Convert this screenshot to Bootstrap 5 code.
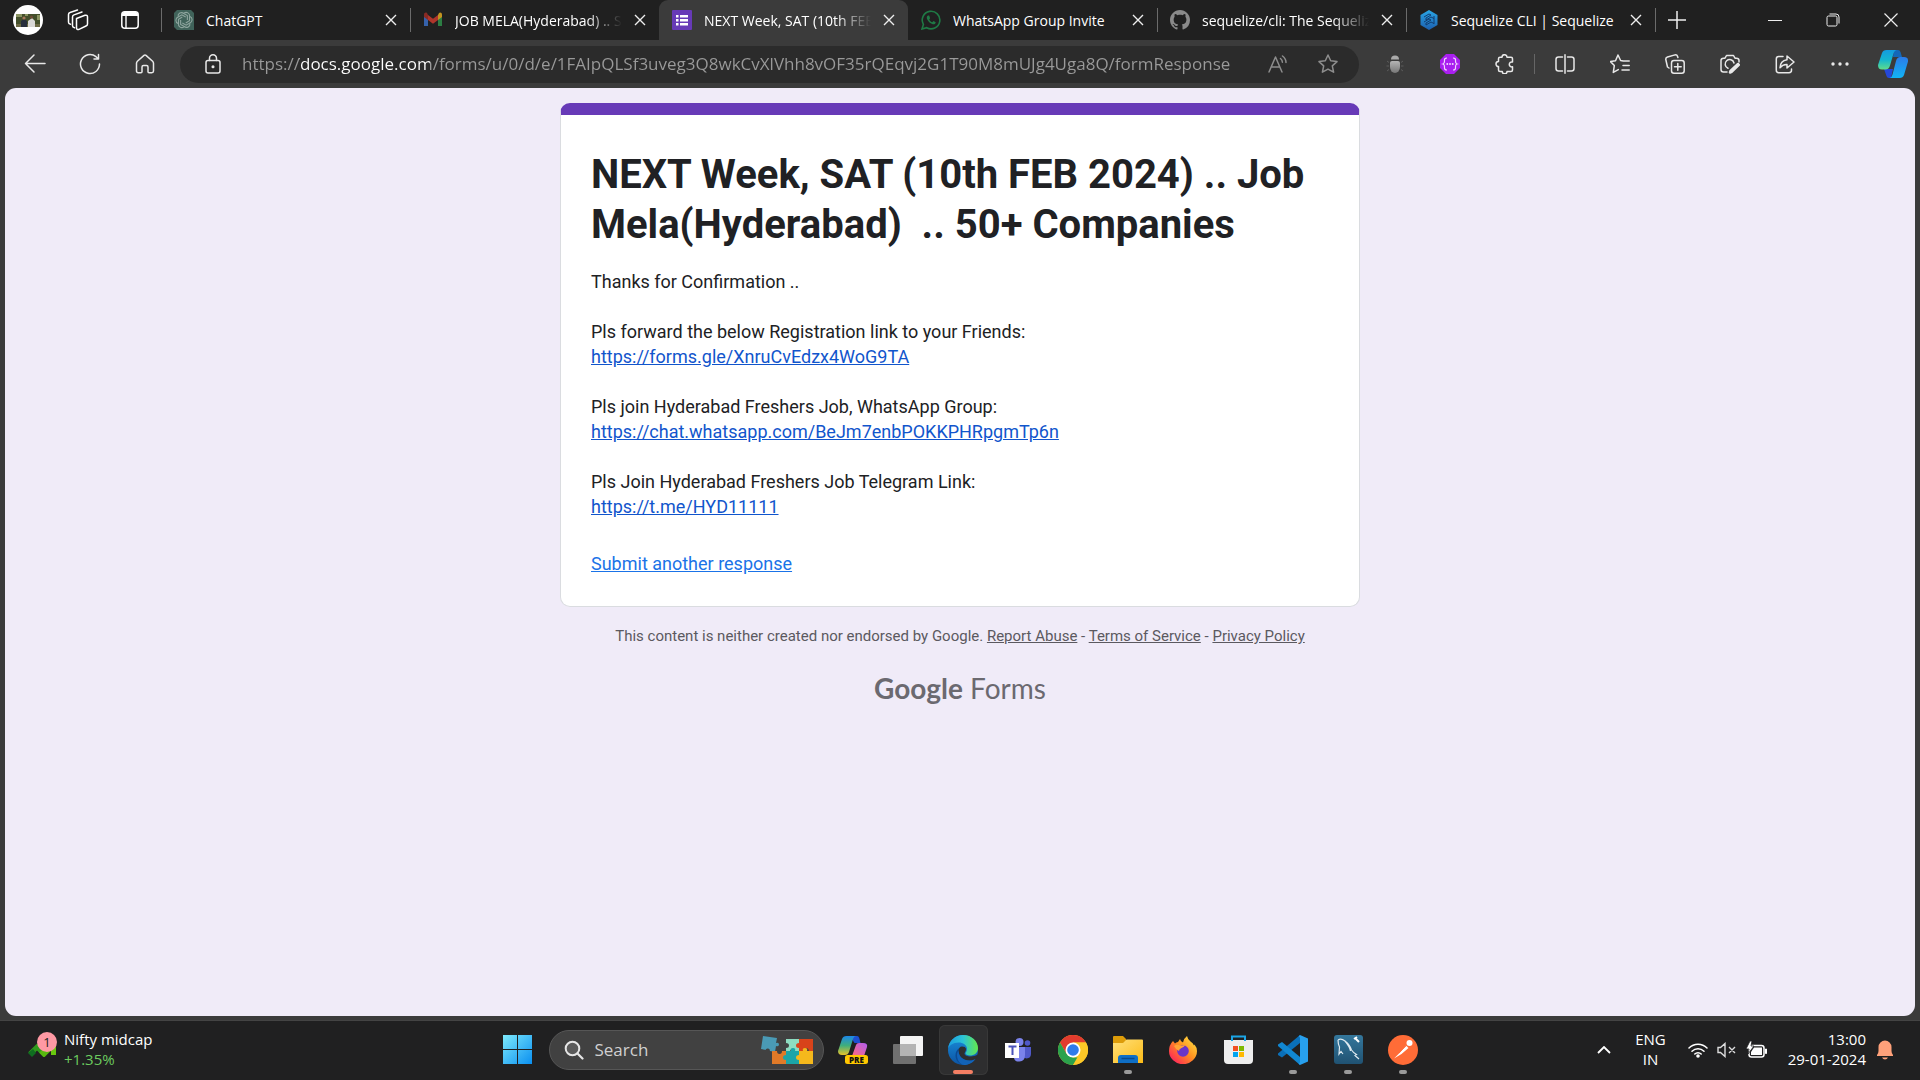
<!DOCTYPE html>
<html lang="en">
<head>
<meta charset="utf-8">
<meta name="viewport" content="width=device-width, initial-scale=1">
<title>NEXT Week, SAT (10th FEB 2024) .. Job Mela(Hyderabad) .. 50+ Companies</title>
<link rel="stylesheet" href="https://cdn.jsdelivr.net/npm/bootstrap@5.3.0/dist/css/bootstrap.min.css">
<style>
  body { background: #3b3b3b; font-family: "Open Sans", "Noto Sans", sans-serif; color: #fff; }
  svg { display: block; flex: none; }
  .ln { fill: none; stroke: currentColor; stroke-width: 1.5; stroke-linecap: round; stroke-linejoin: round; }
  .plain { background: none; border: 0; padding: 0; color: inherit; }

  /* tab strip */
  .strip { height: 40px; background: #202020; font-size: 14px; }
  .lead-tools { width: 161px; padding: 0 22px 0 13px; }
  .avatar { width: 30px; height: 30px; background: #fff; }
  .tab { flex: 0 1 249px; min-width: 0; height: 40px; padding: 0 13px; gap: 12px; }
  .tab-line::before { content: ""; width: 1px; height: 24px; background: #6b6b6b; margin-left: -13px; }
  .tab.active-tab { background: #3b3b3b; border-radius: 9px 9px 0 0; }
  .tab-title { flex: 1 1 0; min-width: 0; overflow: hidden; white-space: nowrap; color: #fff; }
  .fade-end { -webkit-mask-image: linear-gradient(90deg, #000 calc(100% - 36px), transparent); mask-image: linear-gradient(90deg, #000 calc(100% - 36px), transparent); }
  .new-tab { padding-left: 13px; gap: 12px; }
  .win { width: 58px; height: 40px; }

  /* toolbar */
  .tools { height: 48px; padding-right: 1px; color: #e8e8e8; }
  .tool { width: 55px; height: 40px; flex: none; display: grid; place-items: center; }
  .tool.last-tool { width: 52px; }
  .nav-set { padding-left: 7px; }
  .address { height: 37px; background: #2b2b2b; border-radius: 19px; padding: 0 6px 0 24px; }
  .address .tool { width: 50px; }
  .split { width: 1px; height: 20px; margin: 0 2px; background: #666; }
  .url {
    border: 0; outline: 0; min-width: 0; padding: 0 0 2px; margin-left: 20px; font-size: 17px; height: 30px;
    color: transparent; -webkit-background-clip: text; background-clip: text;
    background-image: linear-gradient(90deg, #9a9a9a 57px, #fff 57px, #fff 188px, #9a9a9a 188px);
  }
  .dim { color: #8d8d8d; }

  /* page */
  .sheet { background: #f0ebf8; margin: 0 5px 4px; border-radius: 11px; padding-top: 15px; font-family: Roboto, sans-serif; color: #202124; overflow: hidden; }
  .form-col { max-width: 800px; }
  .form-card { background: #fff; border: 1px solid #dadce0; border-top: 12px solid #673ab7; border-radius: 10px; padding: 35px 30px 30px; font-size: 18px; line-height: 25px; }
  .form-card h1 { font-size: 40px; line-height: 50px; font-weight: 700; margin-bottom: 19px; white-space: pre-wrap; }
  .form-card p { margin-bottom: 25px; }
  .form-card p.again-row { margin-bottom: 0; padding-top: 7px; }
  .form-card a { color: #1155cc; }
  .form-card a.again { color: #1a73e8; }
  .legal { font-size: 15px; line-height: 20px; color: #5b5960; margin-top: 19px; }
  .legal a { color: inherit; }
  .brand { font-family: Lato, sans-serif; font-size: 28px; line-height: 36px; color: #6b6970; margin-top: 24px; }
  .brand b { font-weight: 700; }

  /* taskbar */
  .taskbar { height: 60px; padding-bottom: 2px; background: #202021; border-top: 1px solid #444; display: grid; grid-template-columns: 1fr auto 1fr; align-items: center; }
  .two-line { line-height: 20px; font-size: 15px; padding-bottom: 2px; }
  .gain { color: #6ccb5f; }
  .badge-dot { width: 20px; height: 20px; left: 13px; top: -11px; background: #ff99a4; color: #222; font-size: 13px; line-height: 20px; }
  .tray { padding-right: 26px; }
  .lang { margin-right: 22px; }
  .clock { margin-right: 10px; }
  .app { width: 55px; height: 50px; display: grid; place-items: center; position: relative; border-radius: 6px; }
  .app.is-open::after { content: ""; position: absolute; bottom: 1px; width: 8px; height: 4px; border-radius: 2px; background: #9a9a9a; }
  .app.is-front { width: 49px; margin: 0 3px; background: #2e2e2f; box-shadow: inset 0 0 0 1px #383838; }
  .app.is-front::after { width: 20px; background: #f47f64; }
  .find { width: 275px; height: 40px; background: #414141; border: 1px solid #565656; border-radius: 20px; padding: 0 10px 0 14px; margin: 0 2px 0 4px; }
  .find input { background: none; border: 0; outline: 0; color: #ddd; min-width: 0; padding: 0; font-size: 17px; margin-left: 11px; }
  .find input::placeholder { color: #d0d0d0; opacity: 1; }
</style>
<script src="https://cdn.jsdelivr.net/npm/bootstrap@5.3.0/dist/js/bootstrap.bundle.min.js"></script>
</head>
<body class="vh-100 d-flex flex-column overflow-hidden">

<svg width="0" height="0" class="position-absolute" aria-hidden="true">
  <defs>
    <linearGradient id="gWin" x1="0" y1="0" x2="1" y2="1"><stop offset="0" stop-color="#7deafc"/><stop offset="1" stop-color="#0a8ff0"/></linearGradient>
    <linearGradient id="gCopA" x1="0" y1="0" x2="0" y2="1"><stop offset="0" stop-color="#149be0"/><stop offset=".5" stop-color="#14b5d0"/><stop offset="1" stop-color="#5fdc8a"/></linearGradient>
    <linearGradient id="gCopB" x1="0" y1="0" x2="0" y2="1"><stop offset="0" stop-color="#2c7be8"/><stop offset="1" stop-color="#11b4f5"/></linearGradient>
    <linearGradient id="gCopC" x1="0" y1="0" x2="0" y2="1"><stop offset="0" stop-color="#1c87e8"/><stop offset=".5" stop-color="#3fae7c"/><stop offset="1" stop-color="#e8c22a"/></linearGradient>
    <linearGradient id="gCopD" x1="1" y1="0" x2="0" y2="1"><stop offset="0" stop-color="#b05cf0"/><stop offset="1" stop-color="#ff6a7c"/></linearGradient>
    <linearGradient id="gEdge" x1="0" y1="0" x2="1" y2="0"><stop offset="0" stop-color="#1b9de0"/><stop offset=".5" stop-color="#2cc3d6"/><stop offset="1" stop-color="#63e84a"/></linearGradient>
    <linearGradient id="gEdge2" x1="0" y1="0" x2="0" y2="1"><stop offset="0" stop-color="#1a8fdc"/><stop offset="1" stop-color="#0c54a4"/></linearGradient>
    <linearGradient id="gFold" x1="0" y1="0" x2="1" y2="1"><stop offset="0" stop-color="#ffe07a"/><stop offset="1" stop-color="#fcbb17"/></linearGradient>
    <linearGradient id="gFox" x1="1" y1="0" x2="0" y2="1"><stop offset="0" stop-color="#fff04a"/><stop offset=".45" stop-color="#ff9420"/><stop offset=".8" stop-color="#ff3b4c"/><stop offset="1" stop-color="#e31587"/></linearGradient>
    <linearGradient id="gGray" x1="0" y1="0" x2="0" y2="1"><stop offset="0" stop-color="#b5b5b5"/><stop offset="1" stop-color="#777"/></linearGradient>
    <linearGradient id="gSea" x1="0" y1="0" x2="0" y2="1"><stop offset="0" stop-color="#2aa6e6"/><stop offset="1" stop-color="#1c5fae"/></linearGradient>
    <linearGradient id="gSql" x1="0" y1="0" x2="0" y2="1"><stop offset="0" stop-color="#34779c"/><stop offset="1" stop-color="#205272"/></linearGradient>
    <symbol id="x" viewBox="0 0 12 12"><path d="M1 1l10 10M11 1L1 11" stroke="#eee" stroke-width="1.4" fill="none"/></symbol>
  </defs>
</svg>

<header class="strip d-flex align-items-center">
  <div class="lead-tools d-flex align-items-center justify-content-between">
    <button class="plain avatar rounded-circle" aria-label="Profile"><svg width="30" height="30" viewBox="0 0 30 30"><path fill="#44502c" d="M3 9h24v13H3z"/><path fill="#8b9563" d="M3 9h6v3H3zM12 9h3v2h-3zM24 10h3v5h-3z"/><path fill="#6d6a45" d="M3 19h24v3H3z"/><path fill="#272e3c" d="M8 22v-6l3-2 3 2v6z"/><path fill="#d9d8d6" d="M15 22v-6l4-3 3 3v6z"/><circle cx="11" cy="13" r="1.6" fill="#a9795c"/><circle cx="18.500" cy="12" r="1.600" fill="#6e4c38"/></svg></button>
    <button class="plain me-2" aria-label="Workspaces"><svg class="ln" width="22" height="22" viewBox="0 0 22 22"><path d="M9.500 9.500L18 6.300c1.400-.5 2.500.2 2.500 1.500V15c0 1-.5 1.600-1.500 2l-7 3.400c-1.300.5-2.500 0-2.500-1.300zM5.500 16.800V8c0-1 .5-1.700 1.500-2.100l8-2.900M1.500 13V5.500c0-1 .5-1.700 1.500-2L10.500 1M7.500 18.800c-1.300-.2-2-.9-2-2M3.500 15.200c-1.300-.2-2-.9-2-2"/></svg></button>
    <button class="plain" aria-label="Tab actions"><svg width="18" height="18" viewBox="0 0 18 18"><rect x=".8" y=".8" width="16.400" height="16.400" rx="3" fill="none" stroke="#fff" stroke-width="1.500"/><path d="M1 5V3l2-2h12l2 2v2z" fill="#fff"/><path d="M5 5v12" stroke="#fff" stroke-width="1.400"/></svg></button>
  </div>

  <div class="tab tab-line d-flex align-items-center">
    <svg width="20" height="20" viewBox="0 0 20 20"><path d="M3 0h14l3 3v17H3l-3-3V3z" fill="#40635a"/><g fill="none" stroke="#8ea59e" stroke-width="1.100"><path id="pt" d="M10 3.200a3.400 3.400 0 0 1 5.500 3.300v4.200l-3.800 2.200"/><use href="#pt" transform="rotate(60 10 10)"/><use href="#pt" transform="rotate(120 10 10)"/><use href="#pt" transform="rotate(180 10 10)"/><use href="#pt" transform="rotate(240 10 10)"/><use href="#pt" transform="rotate(300 10 10)"/></g></svg>
    <span class="tab-title">ChatGPT</span>
    <button class="plain" aria-label="Close tab"><svg width="12" height="12"><use href="#x"/></svg></button>
  </div>
  <div class="tab tab-line d-flex align-items-center">
    <svg width="20" height="20" viewBox="0 0 20 20"><g opacity=".85"><path d="M1 4.500v11.500h4V9z" fill="#3b6ec4"/><path d="M15 9v7h4V4.500z" fill="#2f8f4a"/><path d="M15 5v5l4-3V4.500c0-2-2-2.500-3-1.500z" fill="#e0a820"/><path d="M1 7l4 3V5L4 3C2.500 2 1 3 1 4.500z" fill="#9c2c24"/><path d="M5 5l5 3.800L15 5v5l-5 3.800L5 10z" fill="#c9392d"/></g></svg>
    <span class="tab-title fade-end">JOB MELA(Hyderabad) .. SAT</span>
    <button class="plain" aria-label="Close tab"><svg width="12" height="12"><use href="#x"/></svg></button>
  </div>
  <div class="tab active-tab d-flex align-items-center">
    <svg width="20" height="20" viewBox="0 0 20 20"><rect width="20" height="20" rx="1" fill="#673ab7"/><path d="M4 5h2.500v2.500H4zM8 5h8v2.500H8zM4 9h2.500v2.500H4zM8 9h8v2.500H8zM4 13h2.500v2.500H4zM8 13h8v2.500H8z" fill="#fff"/></svg>
    <span class="tab-title fade-end">NEXT Week, SAT (10th FEB 2024)</span>
    <button class="plain" aria-label="Close tab"><svg width="12" height="12"><use href="#x"/></svg></button>
  </div>
  <div class="tab d-flex align-items-center">
    <svg width="20" height="20" viewBox="0 0 20 20"><path d="M1 19l1.400-4.600A8.800 8.800 0 1 1 5.700 17.700z" fill="none" stroke="#1f7a45" stroke-width="1.600"/><path d="M7 5.500c-1.500.8-1.600 2.600-.4 4.600 1.200 2 3 3.700 5.200 4.200 1.700.3 2.900-.7 2.900-2l-2.200-1.200-1.200 1.200c-1.300-.4-2.500-1.600-3.100-2.900l.9-1.100L8.200 5.600z" fill="#1f7a45"/></svg>
    <span class="tab-title">WhatsApp Group Invite</span>
    <button class="plain" aria-label="Close tab"><svg width="12" height="12"><use href="#x"/></svg></button>
  </div>
  <div class="tab tab-line d-flex align-items-center">
    <svg width="20" height="20" viewBox="0 0 16 16"><path fill="#8a8a8a" d="M8 0C3.580 0 0 3.580 0 8c0 3.540 2.290 6.530 5.470 7.590.4.070.55-.17.55-.38 0-.19-.01-.82-.01-1.490-2.010.37-2.530-.49-2.690-.94-.09-.23-.48-.94-.82-1.130-.28-.15-.68-.52-.01-.53.63-.01 1.080.58 1.230.82.72 1.210 1.870.87 2.330.66.07-.52.28-.87.51-1.070-1.780-.2-3.640-.89-3.640-3.950 0-.87.31-1.590.82-2.150-.08-.2-.36-1.020.08-2.120 0 0 .67-.21 2.200.82.64-.18 1.320-.27 2-.27s1.360.09 2 .27c1.530-1.040 2.200-.82 2.200-.82.44 1.100.16 1.920.08 2.120.51.56.82 1.270.82 2.150 0 3.070-1.870 3.750-3.650 3.950.29.25.54.73.54 1.480 0 1.070-.01 1.930-.01 2.200 0 .21.15.46.55.38A8.010 8.010 0 0 0 16 8c0-4.420-3.580-8-8-8z"/></svg>
    <span class="tab-title fade-end">sequelize/cli: The Sequelize CLI</span>
    <button class="plain" aria-label="Close tab"><svg width="12" height="12"><use href="#x"/></svg></button>
  </div>
  <div class="tab tab-line d-flex align-items-center">
    <svg width="20" height="20" viewBox="0 0 20 20"><path d="M10 0l8.500 5v10L10 20l-8.500-5V5z" fill="url(#gSea)"/><path d="M5 7l5-3 2 1-5 3v2l5-3 3 1.500M5 12l5-3 2 1-5 3v2l5-3 3 1.500M15 6v8" fill="none" stroke="#123d70" stroke-width="1"/></svg>
    <span class="tab-title">Sequelize CLI | Sequelize</span>
    <button class="plain" aria-label="Close tab"><svg width="12" height="12"><use href="#x"/></svg></button>
  </div>
  <div class="tab-line new-tab d-flex align-items-center"><button class="plain" aria-label="New tab"><svg width="18" height="18" viewBox="0 0 18 18"><path d="M9 0v18M0 9h18" stroke="#eee" stroke-width="1.500"/></svg></button></div>
  <div class="d-flex ms-auto">
    <button class="plain win d-grid" aria-label="Minimise"><svg class="m-auto" width="14" height="14"><path d="M0 7.500h14" stroke="#eee"/></svg></button>
    <button class="plain win d-grid" aria-label="Restore"><svg class="m-auto" width="14" height="14" viewBox="0 0 14 14"><rect x="1" y="3" width="10" height="10" rx="1.500" fill="none" stroke="#eee"/><path d="M3.500 1H10q3 0 3 3v6.500" fill="none" stroke="#eee"/></svg></button>
    <button class="plain win d-grid" aria-label="Close"><svg class="m-auto" width="14" height="14" viewBox="0 0 14 14"><path d="M.5.5l13 13M13.500.5l-13 13" stroke="#eee" stroke-width="1.200"/></svg></button>
  </div>
</header>

<nav class="tools d-flex align-items-center" aria-label="Browser toolbar">
  <div class="nav-set d-flex">
    <button class="plain tool" aria-label="Back"><svg class="ln" width="22" height="22" viewBox="0 0 22 22"><path d="M21 10.500H1.500M10 2L1.500 10.500l8.500 8.500"/></svg></button>
    <button class="plain tool" aria-label="Refresh"><svg class="ln" width="22" height="22" viewBox="0 0 22 22"><path d="M20.500 11A9.500 9.500 0 1 1 17 3.700L19.500 6M19.500 1.500V6H15"/></svg></button>
    <button class="plain tool" aria-label="Home"><svg class="ln" width="20" height="20" viewBox="0 0 20 20"><path d="M1.500 9.200c0-.8.3-1.400.9-2L9 1.400c.6-.5 1.400-.5 2 0l6.600 5.800c.6.600.9 1.200.9 2V17c0 1-.7 1.700-1.700 1.700H14c-.6 0-1-.4-1-1V13c0-1-.6-1.500-1.500-1.500h-3C7.600 11.500 7 12 7 13v4.700c0 .6-.4 1-1 1H3.200c-1 0-1.700-.7-1.700-1.700z"/></svg></button>
  </div>
  <div class="address d-flex align-items-center flex-grow-1 ms-2">
    <svg class="ln" width="18" height="20" viewBox="0 0 18 20"><rect x="2" y="6.500" width="14" height="12.500" rx="2"/><path d="M5.500 6.500V4.300a3.500 3.500 0 0 1 7 0v2.200"/><circle cx="9" cy="12.800" r=".8" fill="currentColor"/></svg>
    <input class="url flex-grow-1" type="text" aria-label="Address" value="https://docs.google.com/forms/u/0/d/e/1FAIpQLSf3uveg3Q8wkCvXlVhh8vOF35rQEqvj2G1T90M8mUJg4Uga8Q/formResponse">
    <button class="plain tool dim" aria-label="Read aloud"><svg class="ln" width="20" height="20" viewBox="0 0 20 20"><path d="M1 18L7.500 3 14 18M3.200 13h8.600M12.500 4.500c1.300 1 1.900 2.200 1.900 3.800M14.500 2c2.300 1.700 3.500 3.800 3.500 6.500"/></svg></button>
    <button class="plain tool dim" aria-label="Favourite"><svg class="ln" width="20" height="20" viewBox="0 0 20 20"><path d="M10 1l2.700 5.800 6.300.8-4.700 4.300 1.300 6.300L10 15.100l-5.600 3.100 1.300-6.300L1 7.600l6.300-.8z"/></svg></button>
  </div>
  <div class="d-flex align-items-center ps-2">
    <button class="plain tool" aria-label="Bug extension"><svg width="20" height="20" viewBox="0 0 20 20"><path d="M6 5.500a4 4 0 0 1 8 0z" fill="#aaa"/><path d="M5 9q0-2 2-2h6q2 0 2 2v4a5 6 0 0 1-10 0z" fill="url(#gGray)"/><path d="M2 7l2 1.500M1.500 12H4M2 17l2-1.500M18 7l-2 1.500M18.500 12H16M18 17l-2-1.500" stroke="#5c5c5c"/></svg></button>
    <button class="plain tool" aria-label="Code extension"><svg width="20" height="20" viewBox="0 0 20 20"><path d="M6 0h8l6 6v8l-6 6H6l-6-6V6z" fill="#a91ff0"/><path d="M7 4q-3 0-2.500 3 .2 2.500-1.500 3 1.700.5 1.500 3Q4 16 7 16M13 4q3 0 2.500 3-.2 2.500 1.500 3-1.700.5-1.500 3 .5 3-2.500 3" fill="none" stroke="#f2d6ff" stroke-width="1.200"/><path d="M6.500 10h1.600M9.200 10h1.600M11.900 10h1.600" stroke="#fff" stroke-width="1.600"/></svg></button>
    <button class="plain tool" aria-label="Extensions"><svg class="ln" width="20" height="20" viewBox="0 0 20 20"><path d="M7 3.200a2.500 2.500 0 0 1 5 0h4c.9 0 1.500.6 1.500 1.500V8a2.500 2.500 0 1 0 0 4.800V16c0 .9-.6 1.500-1.500 1.500h-4a2.300 2.300 0 0 1-4.700 0H5c-.9 0-1.500-.6-1.500-1.500v-3.400a2.500 2.500 0 0 1 0-5V4.700c0-.9.6-1.500 1.500-1.500z"/></svg></button>
    <span class="split"></span>
    <button class="plain tool" aria-label="Split screen"><svg class="ln" width="20" height="20" viewBox="0 0 20 20"><path d="M10 .8v18.400M7.500 3H3.500Q1 3 1 5.500v9Q1 17 3.500 17h4M12.500 3h4Q19 3 19 5.500v9q0 2.500-2.500 2.500h-4"/></svg></button>
    <button class="plain tool" aria-label="Favourites"><svg class="ln" width="20" height="20" viewBox="0 0 20 20"><path d="M19.200 7h-6L10.600 6.500 8 1 5.500 6.800l-5 .8 3.800 4-1 6.800 5-2.800M13 11.500h6.200M12 16h7.200"/></svg></button>
    <button class="plain tool" aria-label="Collections"><svg class="ln" width="20" height="20" viewBox="0 0 20 20"><rect x="6.500" y="6.500" width="12.700" height="12.700" rx="2.500"/><path d="M12.800 9.500v6.700M9.500 12.800h6.700M4 14l-1.500-1L.8 5.500Q.6 3.500 2.500 3L10 .9q2-.3 2.600 1.600l.3 1"/></svg></button>
    <button class="plain tool" aria-label="Screenshot"><svg class="ln" width="20" height="20" viewBox="0 0 20 20"><path d="M7 18H3.500Q1 18 1 15.500v-9Q1 4.200 3.500 4.200H5L6.500 1.500h7L15 4.200h1.500Q19 4.200 19 6.500V8M8 14.300a4.500 4.500 0 1 1 6-5.300"/><path d="M18 10l.8.8-7.200 7-1.600.7.500-1.500z" stroke-width="2.500" fill="currentColor"/></svg></button>
    <button class="plain tool" aria-label="Share"><svg class="ln" width="20" height="20" viewBox="0 0 20 20"><path d="M8 2.500H3.700Q1.300 2.500 1.300 5v11.300q0 2.400 2.400 2.400H14q2.500 0 2.500-2.400V15M12 2l7 6-7 6v-3.400q-4.500-.2-7 3.200.3-7 7-8z"/></svg></button>
    <button class="plain tool" aria-label="Settings"><svg width="18" height="4" viewBox="0 0 18 4"><g fill="#e8e8e8"><circle cx="2" cy="2" r="1.700"/><circle cx="9" cy="2" r="1.700"/><circle cx="16" cy="2" r="1.700"/></g></svg></button>
    <button class="plain tool last-tool" aria-label="Copilot"><svg width="30" height="28" viewBox="0 0 30 28"><path d="M16 0h4q2 0 2.500 2l1.500 5h-9z" fill="#1467b8"/><path d="M6 19h9l-2 9h-2q-2 0-2.500-2z" fill="#2548d8"/><path d="M4 3q1-3 4.500-3H19q-2.500 0-3.500 3.500l-3.500 12q-1 4-4.500 4H4q-4 0-4-4.500z" fill="url(#gCopA)"/><path d="M26 25q-1 3-4.500 3H11q2.500 0 3.500-3.500L18 11q1-4 4.500-4H26q4.500 0 4 4.500z" fill="url(#gCopB)"/></svg></button>
  </div>
</nav>

<main class="sheet flex-grow-1">
  <div class="form-col mx-auto">
    <section class="form-card">
      <h1>NEXT Week, SAT (10th FEB 2024) .. Job Mela(Hyderabad)  .. 50+ Companies</h1>
      <p>Thanks for Confirmation ..</p>
      <p>Pls forward the below Registration link to your Friends:<br><a href="#">https://forms.gle/XnruCvEdzx4WoG9TA</a></p>
      <p>Pls join Hyderabad Freshers Job, WhatsApp Group:<br><a href="#">https://chat.whatsapp.com/BeJm7enbPOKKPHRpgmTp6n</a></p>
      <p>Pls Join Hyderabad Freshers Job Telegram Link:<br><a href="#">https://t.me/HYD11111</a></p>
      <p class="again-row"><a class="again" href="#">Submit another response</a></p>
    </section>
    <p class="legal text-center mb-0">This content is neither created nor endorsed by Google. <a href="#">Report Abuse</a> - <a href="#">Terms of Service</a> - <a href="#">Privacy Policy</a></p>
    <div class="brand text-center"><b>Google</b> Forms</div>
  </div>
</main>

<footer class="taskbar">
  <div class="d-flex align-items-center ps-4 gap-2">
    <div class="position-relative ps-1">
      <svg width="28" height="14" viewBox="0 0 28 14"><path d="M2 11l7-7 7 7 9-9" fill="none" stroke="#2f9a1c" stroke-width="5"/><path d="M13 8l3 3 10-10" fill="none" stroke="#58b80f" stroke-width="5"/><path d="M18 0h10v12h-5V5h-5z" fill="#69c80f"/><path d="M0 10l5-4 3 4-4 4z" fill="#0f6e20"/></svg>
      <span class="badge-dot position-absolute rounded-circle text-center">1</span>
    </div>
    <div class="two-line"><div>Nifty midcap</div><div class="gain">+1.35%</div></div>
  </div>

  <div class="d-flex align-items-center">
    <button class="plain app" aria-label="Start"><svg width="29" height="29" viewBox="0 0 29 29"><path d="M0 0h14v14H0zM15 0h14v14H15zM0 15h14v14H0zM15 15h14v14H15z" fill="url(#gWin)"/></svg></button>
    <label class="find d-flex align-items-center">
      <svg width="20" height="20" viewBox="0 0 20 20"><circle cx="8.500" cy="8.500" r="6.800" fill="#5a5a5a" stroke="#e6e6e6" stroke-width="2"/><path d="M13.500 13.500l5 5" stroke="#e6e6e6" stroke-width="2.200" stroke-linecap="round"/></svg>
      <input class="flex-grow-1" type="search" placeholder="Search" aria-label="Search">
      <svg width="52" height="30" viewBox="0 0 52 30"><path d="M2 1l14 2-1 5q3-1 3 1.500T15 11l-1 6-5-1q0-3-2.500-2.500T5 15l-5-1z" fill="#4a9ab5"/><path d="M25 4h13v13h-4q0-3-2.500-3T29 17h-4v-4q3 0 3-2.500T25 8z" fill="#8edcc0"/><path d="M38 4h14v13h-4q0-4-3-4t-2 4h-5v-4q-3 0-3-2.500T38 8z" fill="#d8431a"/><path d="M11 16h5q0 3 2.500 3t2.500-3h4v13H11z" fill="#e07a28"/><path d="M25 16h5q-1-3 2-3t2 3h4v13H25v-4q-3 0-3-2.500T25 20z" fill="#1ba5a8"/><path d="M38 16h4q-1-3 2-3t2 3h6v13H38v-4q-3 0-3-2.500T38 20z" fill="#f5b81c"/></svg>
    </label>
    <button class="plain app" aria-label="Copilot preview"><svg width="30" height="29" viewBox="0 0 30 29"><path d="M12 1h7q2 0 2.500 3l1 4h-6z" fill="#1d4fd0"/><path d="M4 4q1-3 4.500-3H18q-2 0-3 3l-4 13q-1 3-4 3H4q-4 0-4-4z" fill="url(#gCopC)"/><path d="M18 10q.5-2 3-2h4q5 0 4 4l-3 9H14z" fill="url(#gCopD)"/><rect x="7" y="20" width="23" height="9" rx="2.500" fill="#ffc800"/><text x="18.500" y="27.500" font-family="Open Sans" font-size="8" font-weight="800" text-anchor="middle" fill="#111">PRE</text></svg></button>
    <button class="plain app" aria-label="Task view"><svg width="30" height="28" viewBox="0 0 30 28"><rect x="7" y="0" width="23" height="20" rx="1" fill="#f4f4f4"/><rect x="0" y="8" width="23" height="20" rx="1" fill="#707070"/><path d="M7 8h16v12H7z" fill="#b4b4b4"/></svg></button>
    <button class="plain app is-open is-front" aria-label="Microsoft Edge"><svg width="30" height="30" viewBox="0 0 30 30"><circle cx="15" cy="15" r="15" fill="url(#gEdge2)"/><path d="M0 14C1 5 8 0 15 0c9 0 15 6.500 15 13 0 5-4 7.500-8 7.500-3 0-4.500-1-4.500-2.200 0-1 1.500-1.800 1.500-4.300C19 10 15 7.500 10.500 7.500 5 7.500 1 10.500 0 14z" fill="url(#gEdge)"/><path d="M10.500 16c0 5 4 9 10 9 3 0 5-1 7-2.500C25 27 21 30 16 30 11 29 7.500 25.500 7.500 20.500c0-3.500 1.500-6 4-7.500-.7 1-1 2-1 3z" fill="#0b4a94"/><path d="M18 14c0 2.500-1.500 3.300-1.500 4.500 0 1.800 2.500 3 6 3 3 0 5-.8 6.500-1.500L30 22c-3 3-6 3.500-9 3.500-6 0-10.500-4-10.500-9.500 0-3 1.500-4.500 3.500-4.500s4 .8 4 2.500z" fill="#2e2e2f"/><path d="M10.500 16c0 5 4.500 9.500 11 9.500 2.500 0 4.800-.7 6-1.500C25 27.500 21 30 16 30 11 29 9 24 9 20c0-2 .5-3 1.500-4z" fill="#1263b8"/></svg></button>
    <button class="plain app" aria-label="Teams"><svg width="27" height="24" viewBox="0 0 27 24"><circle cx="22.500" cy="5" r="2.800" fill="#5059c9"/><circle cx="14.500" cy="4" r="4" fill="#7b83eb"/><path d="M17 9h9v7q0 4-4.500 4.500L17 19z" fill="#5059c9"/><path d="M8 9h12v8q0 6-5.500 6.500T9 19z" fill="#7b83eb"/><rect y="5" width="14" height="15" fill="#fff"/><path d="M3.500 8.500h8M7.500 8.500v8.500" stroke="#4b53bc" stroke-width="2"/></svg></button>
    <button class="plain app" aria-label="Chrome"><svg width="30" height="30" viewBox="0 0 30 30"><circle cx="15" cy="15" r="15" fill="#fdc827"/><path d="M2 7.500A15 15 0 0 1 28 7.500H15L8.500 19z" fill="#e23b2e"/><path d="M2 7.500L8.500 18.700 15 22.500h6.300L15 30A15 15 0 0 1 2 7.500z" fill="#2ba24c"/><path d="M21.500 18.700L15 30a15 15 0 0 0 13-22.500H15z" fill="#fdc827"/><circle cx="15" cy="15" r="7.500" fill="#fff"/><circle cx="15" cy="15" r="5.800" fill="#2f7bea"/></svg></button>
    <button class="plain app is-open" aria-label="File Explorer"><svg width="30" height="27" viewBox="0 0 30 27"><path d="M0 1q0-1 1-1h9l3 3v5H0z" fill="#dd9c09"/><path d="M0 7h10l3.500-3.500H29q1 0 1 1V27H0z" fill="url(#gFold)"/><path d="M5 27v-5q0-3 3-3h14q3 0 3 3v5z" fill="#0f6fc6"/><path d="M8.500 22.500h13" stroke="#0a4a8c" stroke-width="1.500"/></svg></button>
    <button class="plain app" aria-label="Firefox"><svg width="28" height="28" viewBox="0 0 28 28"><path d="M4 5l2 2.500q1-1.500 3-1.500l2-3q.5 2.500 3 3.500 1-4.500 4-6.500.5 3 3.500 5.500Q24 7 25 9.500l.5-1Q28 11.500 28 15a14 13.200 0 0 1-28 0Q0 9 4 5z" fill="url(#gFox)"/><circle cx="14" cy="15" r="5.800" fill="#6a35c9"/><path d="M5 10q3-2 6-.5 1 .6 5-.5-.5 2-3.500 3-2.500 1-2.500 3-3-1-5-5z" fill="#ffa436"/></svg></button>
    <button class="plain app" aria-label="Microsoft Store"><svg width="29" height="29" viewBox="0 0 29 29"><path d="M0 5h29v20q0 4-4 4H4q-4 0-4-4z" fill="#eee"/><path d="M8 6V1.500h13V6" fill="none" stroke="#1ba5e6" stroke-width="2"/><path d="M9 11h5v5H9z" fill="#f25022"/><path d="M15 11h5v5h-5z" fill="#7fba00"/><path d="M9 17h5v5H9z" fill="#00a4ef"/><path d="M15 17h5v5h-5z" fill="#ffb900"/></svg></button>
    <button class="plain app is-open" aria-label="Visual Studio Code"><svg width="30" height="30" viewBox="0 0 30 30"><path d="M22 0v8L4 22.500 0 20v-1.500z" fill="#0a6fb8"/><path d="M22 30v-8L4 7 0 9.500V11z" fill="#1187d2"/><path d="M22 0l8 3.500v23L22 30l-1.500-1.500q1.500.5 1.500-2v-23q0-2.500-1.500-2z" fill="#27a0ee"/></svg></button>
    <button class="plain app is-open" aria-label="MySQL Workbench"><svg width="29" height="29" viewBox="0 0 29 29"><rect width="29" height="29" rx="3" fill="url(#gSql)"/><path d="M4 5q3-2 7 1 5 4 6.500 9 2 3 5 4.500l-1.500 1 4 3.500M4 5q0 4 1.500 7l-.5 7 2-2.500 2 2.500M11 6q5 6 5.500 10" fill="none" stroke="#dfeaf0" stroke-width="1.200"/><path d="M21 3l4 4M20 4l3-2" stroke="#fff" stroke-width="2"/></svg></button>
    <button class="plain app is-open" aria-label="Postman"><svg width="30" height="30" viewBox="0 0 30 30"><circle cx="15" cy="15" r="15" fill="#ff6c37"/><path d="M6 23.500l6-6 6-7 2.500 2.500-7 6z" fill="#fff"/><circle cx="21.500" cy="8" r="3" fill="#fff"/><path d="M11 18l8-8" stroke="#ff6c37" stroke-width=".8"/></svg></button>
  </div>

  <div class="tray d-flex align-items-center justify-content-end">
    <button class="plain me-4" aria-label="Show hidden icons"><svg width="14" height="8" viewBox="0 0 14 8"><path d="M1 7l6-6 6 6" fill="none" stroke="#fff" stroke-width="1.800"/></svg></button>
    <div class="two-line lang text-center">ENG<br>IN</div>
    <div class="d-flex align-items-center gap-2 me-3 pe-1">
      <svg width="20" height="16" viewBox="0 0 20 16"><g fill="none" stroke="#fff" stroke-width="1.500" stroke-linecap="round"><path d="M1 6a12.700 12.700 0 0 1 18 0M4 9.200a8.500 8.500 0 0 1 12 0M6.800 12a4.500 4.500 0 0 1 6.400 0"/></g><circle cx="10" cy="14" r="1.800" fill="#fff"/></svg>
      <svg width="22" height="16" viewBox="0 0 22 16"><path d="M2 5.500h2.500L9 1.500v13l-4.500-4H2zM13 5l6 6M19 5l-6 6" fill="none" stroke="#ddd" stroke-width="1.400"/></svg>
      <svg width="22" height="18" viewBox="0 0 22 18"><rect x="3" y="4.500" width="15" height="11.500" rx="2.500" fill="none" stroke="#fff" stroke-width="1.500"/><path d="M8 6.500h8v7.500H5V11z" fill="#fff"/><path d="M19.500 8h1v4.500h-1z" fill="#fff" stroke="#fff"/><path d="M4 0L0 8h3l-1 5 6-8H5l1-5z" fill="#fff" stroke="#202021" stroke-width=".8"/></svg>
    </div>
    <div class="two-line clock text-end">13:00<br>29-01-2024</div>
    <button class="plain" aria-label="Notifications"><svg width="18" height="20" viewBox="0 0 18 20"><path d="M1 15q1.500-1.500 1.500-4V7a6.500 6.500 0 0 1 13 0v4q0 2.500 1.500 4v1H1zM6 17.500h6q-1 2-3 2t-3-2z" fill="#ffa17a"/></svg></button>
  </div>
</footer>
</body>
</html>
